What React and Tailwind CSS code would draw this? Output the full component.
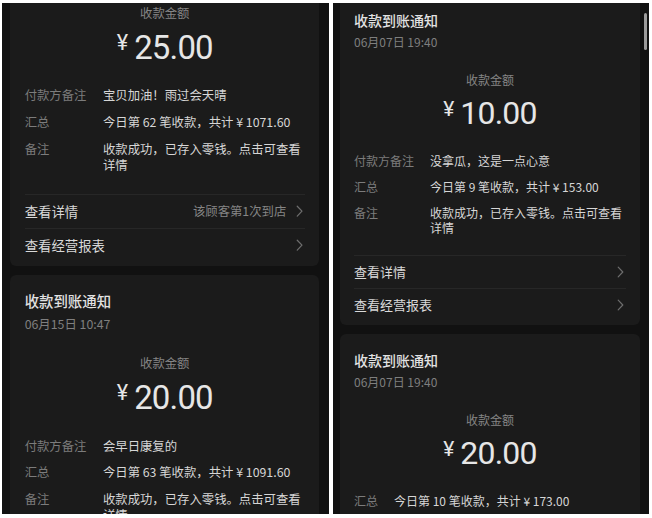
import React from 'react';

const Chevron = () => (
  <svg width="7" height="12" viewBox="0 0 7 12" fill="none" className="shrink-0">
    <path d="M1.2 1.2L5.8 6L1.2 10.8" stroke="#6e6e6e" strokeWidth="1.2" strokeLinecap="round" strokeLinejoin="round" />
  </svg>
);

const NoticeCard = ({ title, date, amount, rows, links, className = '' }) => (
  <div className={`w-[300px] shrink-0 rounded-md bg-[#1b1b1b] pl-[14px] pr-[14px] pt-[17px] pb-[4px] ${className}`}>
    {/* Header */}
    <div className="text-[14px] leading-[18px] font-medium text-[#e2e2e2]">{title}</div>
    <div className="mt-[5px] text-[12px] leading-[16px] text-[#7f7f7f]">{date}</div>

    {/* Amount */}
    <div className="mt-[22px] text-center text-[12px] leading-[16px] text-[#858585]">收款金额</div>
    <div className="mt-[5px] flex items-start justify-center text-[#e6e6e6] font-['Roboto',sans-serif]">
      <span className="text-[21px] leading-[32px] mr-[6px]">¥</span>
      <span className="text-[32px] leading-[40px] tracking-tight">{amount}</span>
    </div>

    {/* Details */}
    <div className="mt-[20px] grid grid-cols-[auto_1fr] gap-x-4 gap-y-[11px] text-[12px] leading-[15px]">
      {rows.map((row) => (
        <React.Fragment key={row.label}>
          <div className="text-[#7c7c7c]">{row.label}</div>
          <div className="text-[#d6d6d6]">{row.value}</div>
        </React.Fragment>
      ))}
    </div>

    {/* Links */}
    {links && (
      <div className="mt-[20px]">
        {links.map((link) => (
          <div key={link.text} className="h-[33px] border-t border-[#272727] flex items-center justify-between">
            <span className="text-[13px] text-[#d9d9d9]">{link.text}</span>
            <span className="flex items-center gap-[9px] pr-[2px]">
              {link.extra && <span className="text-[12px] text-[#858585]">{link.extra}</span>}
              <Chevron />
            </span>
          </div>
        ))}
      </div>
    )}
  </div>
);

const note = '收款成功，已存入零钱。点击可查看详情';
const links = (extra) => [
  { text: '查看详情', extra },
  { text: '查看经营报表' },
];

export default function App() {
  return (
    <div className="w-[652px] h-[518px] bg-white flex gap-[4px] pt-[3px] pl-[2px] pr-[3px] pb-[4px] font-['Noto_Sans_CJK_SC','Noto_Sans',sans-serif]">
      {/* Left screenshot */}
      <div className="w-[327px] h-full overflow-hidden bg-[#111111]">
        <div className="[zoom:1.03] flex flex-col pl-[8px]">
          <NoticeCard
            className="mt-[-76px]"
            title="收款到账通知"
            date="06月15日 10:40"
            amount="25.00"
            rows={[
              { label: '付款方备注', value: '宝贝加油！雨过会天晴' },
              { label: '汇总', value: '今日第 62 笔收款，共计 ¥ 1071.60' },
              { label: '备注', value: note },
            ]}
            links={links('该顾客第1次到店')}
          />
          <NoticeCard
            className="mt-[9px]"
            title="收款到账通知"
            date="06月15日 10:47"
            amount="20.00"
            rows={[
              { label: '付款方备注', value: '会早日康复的' },
              { label: '汇总', value: '今日第 63 笔收款，共计 ¥ 1091.60' },
              { label: '备注', value: note },
            ]}
            links={links()}
          />
        </div>
      </div>

      {/* Right screenshot */}
      <div className="relative w-[316px] h-full overflow-hidden bg-[#111111]">
        <div className="flex flex-col pl-[7px]">
          <NoticeCard
            className="mt-[-9px]"
            title="收款到账通知"
            date="06月07日 19:40"
            amount="10.00"
            rows={[
              { label: '付款方备注', value: '没拿瓜，这是一点心意' },
              { label: '汇总', value: '今日第 9 笔收款，共计 ¥ 153.00' },
              { label: '备注', value: note },
            ]}
            links={links()}
          />
          <NoticeCard
            className="mt-[9px]"
            title="收款到账通知"
            date="06月07日 19:40"
            amount="20.00"
            rows={[
              { label: '汇总', value: '今日第 10 笔收款，共计 ¥ 173.00' },
              { label: '备注', value: note },
            ]}
            links={links()}
          />
        </div>
        <div className="absolute right-[2px] top-[10px] w-[3px] h-[37px] rounded-full bg-[#9a9a9a]" />
      </div>
    </div>
  );
}
